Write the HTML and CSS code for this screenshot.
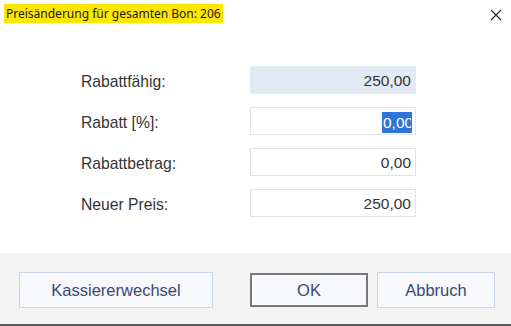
FILE: index.html
```html
<!DOCTYPE html>
<html lang="de">
<head>
  <meta charset="UTF-8"/>
  <title>Preisänderung</title>
  <link rel="stylesheet" href="styles.css">
</head>
<body>
  <div class="dialog">
    <div class="titlebar">
      <span class="title">Preisänderung für gesamten Bon: 206</span>
      <span class="close">
        <svg width="12" height="12" viewBox="0 0 12 12"><path d="M1 1 L11 11 M11 1 L1 11" stroke="#222" stroke-width="1.1" fill="none"/></svg>
      </span>
    </div>
    <div class="content">
      <div class="row">
        <label>Rabattfähig:</label>
        <div class="field readonly">250,00</div>
      </div>
      <div class="row">
        <label>Rabatt [%]:</label>
        <div class="field focus"><span class="sel">0,00</span><span class="caret"></span></div>
      </div>
      <div class="row">
        <label>Rabattbetrag:</label>
        <div class="field">0,00</div>
      </div>
      <div class="row">
        <label>Neuer Preis:</label>
        <div class="field">250,00</div>
      </div>
    </div>
    <div class="footer">
      <button class="btn wide">Kassiererwechsel</button>
      <div class="right">
        <button class="btn default">OK</button>
        <button class="btn">Abbruch</button>
      </div>
    </div>
  </div>
</body>
</html>
```

FILE: styles.css
```css
*, *::before, *::after { box-sizing: border-box; margin:0; padding:0 }
html, body { width:511px; height:326px; overflow:hidden; background:#fff }
body { font-family:'Liberation Sans', Arial, sans-serif; color:#333 }

.dialog { display:flex; flex-direction:column; height:326px }

.titlebar {
  display:flex; align-items:flex-start; justify-content:space-between;
  height:66px; padding:4px 0 0 4px;
}
.title {
  background:#fde600;
  font-family:'Noto Sans', 'Open Sans', sans-serif;
  font-size:12px; line-height:19px;
  padding:0 2px 0 2px;
  color:#1a1a1a;
}
.close { display:flex; padding:5px 9px 0 0; }

.content { display:flex; flex-direction:column; gap:13px; padding-left:81px; height:187px }
.row { display:flex; align-items:center; height:28px }
.row label { width:169px; font-size:15.7px; color:#333; padding-top:3px }
.field {
  width:166px; height:28px;
  border:1px solid #e2e2e2;
  display:flex; align-items:center; justify-content:flex-end;
  padding:2px 4px 0 0;
  font-size:15.5px; color:#333;
}
.field.readonly { background:#e3eaf5; border-color:#e3eaf5 }
.field.focus { border-color:#e0e7f0; padding-right:3px }
.sel {
  background:#2f74d6; color:#fff;
  width:29px; overflow:hidden; white-space:nowrap;
  line-height:21px; padding-left:1px;
}
.caret { width:1px; height:21px; background:#7a6a50 }

.footer {
  flex:1;
  background:#f3f3f3;
  border-bottom:2px solid #5a5a5a;
  display:flex; align-items:flex-start; justify-content:space-between;
  padding:19px 16px 0 19px;
}
.right { display:flex; gap:9px }
.btn {
  height:36px;
  font-family:'Liberation Sans', Arial, sans-serif;
  font-size:16.5px; color:#3b4870;
  background:#f6f8fb;
  border:1px solid #c8d4e6;
}
.btn.wide { width:194px }
.right .btn { width:118px }
.btn.default { border:2px solid #787878; height:34px; margin-top:1px }
```
